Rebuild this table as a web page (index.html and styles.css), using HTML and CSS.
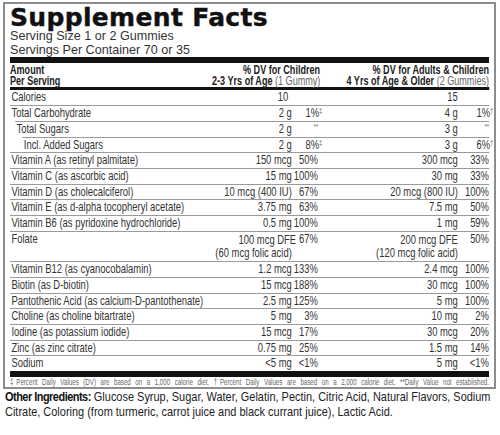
FILE: index.html
```html
<!DOCTYPE html>
<html lang="en">
<head>
    <meta charset="UTF-8">
    <title>Supplement Facts</title>
    <link rel="stylesheet" href="styles.css">
</head>
<body>
    <div class="label">
        <h1 class="title">Supplement Facts</h1>
        <p class="serving">Serving Size 1 or 2 Gummies<br>Servings Per Container 70 or 35</p>
        <div class="bar"></div>

        <!-- narrow type: Arial Narrow is not installed, so the table is squeezed -->
        <div class="cond">
            <div class="head">
                <div class="name">Amount<br>Per Serving</div>
                <div class="dv1">% DV for Children<br>2-3 Yrs of Age <span class="light">(1 Gummy)</span></div>
                <div class="dv2">% DV for Adults &amp; Children<br>4 Yrs of Age &amp; Older <span class="light">(2 Gummies)</span></div>
            </div>

            <div class="row first">
                <div class="name">Calories</div>
                <div class="a1 cal">10</div><div class="p1"></div>
                <div class="a2">15</div><div class="p2"></div>
            </div>
            <div class="row">
                <div class="name">Total Carbohydrate</div>
                <div class="a1">2 g</div><div class="p1">1%<sup>‡</sup></div>
                <div class="a2">4 g</div><div class="p2">1%<sup>†</sup></div>
            </div>
            <div class="row ind1">
                <div class="name">Total Sugars</div>
                <div class="a1">2 g</div><div class="p1"><sup class="na">**</sup></div>
                <div class="a2">3 g</div><div class="p2"><sup class="na">**</sup></div>
            </div>
            <div class="row ind2">
                <div class="name">Incl. Added Sugars</div>
                <div class="a1">2 g</div><div class="p1">8%<sup>‡</sup></div>
                <div class="a2">3 g</div><div class="p2">6%<sup>†</sup></div>
            </div>
            <div class="row">
                <div class="name">Vitamin A (as retinyl palmitate)</div>
                <div class="a1">150 mcg</div><div class="p1">50%</div>
                <div class="a2">300 mcg</div><div class="p2">33%</div>
            </div>
            <div class="row">
                <div class="name">Vitamin C (as ascorbic acid)</div>
                <div class="a1">15 mg</div><div class="p1">100%</div>
                <div class="a2">30 mg</div><div class="p2">33%</div>
            </div>
            <div class="row">
                <div class="name">Vitamin D (as cholecalciferol)</div>
                <div class="a1">10 mcg (400 IU)</div><div class="p1">67%</div>
                <div class="a2">20 mcg (800 IU)</div><div class="p2">100%</div>
            </div>
            <div class="row">
                <div class="name">Vitamin E (as d-alpha tocopheryl acetate)</div>
                <div class="a1">3.75 mg</div><div class="p1">63%</div>
                <div class="a2">7.5 mg</div><div class="p2">50%</div>
            </div>
            <div class="row">
                <div class="name">Vitamin B6 (as pyridoxine hydrochloride)</div>
                <div class="a1">0.5 mg</div><div class="p1">100%</div>
                <div class="a2">1 mg</div><div class="p2">59%</div>
            </div>
            <div class="row two">
                <div class="name">Folate</div>
                <div class="a1"><span class="out">100 mcg DFE</span><br>(60 mcg folic acid)</div><div class="p1">67%</div>
                <div class="a2">200 mcg DFE<br>(120 mcg folic acid)</div><div class="p2">50%</div>
            </div>
            <div class="row">
                <div class="name">Vitamin B12 (as cyanocobalamin)</div>
                <div class="a1">1.2 mcg</div><div class="p1">133%</div>
                <div class="a2">2.4 mcg</div><div class="p2">100%</div>
            </div>
            <div class="row">
                <div class="name">Biotin (as D-biotin)</div>
                <div class="a1">15 mcg</div><div class="p1">188%</div>
                <div class="a2">30 mcg</div><div class="p2">100%</div>
            </div>
            <div class="row">
                <div class="name">Pantothenic Acid (as calcium-D-pantothenate)</div>
                <div class="a1">2.5 mg</div><div class="p1">125%</div>
                <div class="a2">5 mg</div><div class="p2">100%</div>
            </div>
            <div class="row">
                <div class="name">Choline (as choline bitartrate)</div>
                <div class="a1">5 mg</div><div class="p1">3%</div>
                <div class="a2">10 mg</div><div class="p2">2%</div>
            </div>
            <div class="row">
                <div class="name">Iodine (as potassium iodide)</div>
                <div class="a1">15 mcg</div><div class="p1">17%</div>
                <div class="a2">30 mcg</div><div class="p2">20%</div>
            </div>
            <div class="row">
                <div class="name">Zinc (as zinc citrate)</div>
                <div class="a1">0.75 mg</div><div class="p1">25%</div>
                <div class="a2">1.5 mg</div><div class="p2">14%</div>
            </div>
            <div class="row">
                <div class="name">Sodium</div>
                <div class="a1">&lt;5 mg</div><div class="p1">&lt;1%</div>
                <div class="a2">5 mg</div><div class="p2">&lt;1%</div>
            </div>
        </div>

        <div class="bar"></div>
        <div class="cond">
            <p class="foot">‡Percent Daily Values (DV) are based on a 1,000 calorie diet. †Percent Daily Values are based on a 2,000 calorie diet. **Daily Value not established.</p>
        </div>
    </div>

    <div class="ingr-box">
        <p class="ingr"><b>Other Ingredients:</b> Glucose Syrup, Sugar, Water, Gelatin, Pectin, Citric Acid, Natural Flavors, Sodium<br>Citrate, Coloring (from turmeric, carrot juice and black currant juice), Lactic Acid.</p>
    </div>
</body>
</html>
```

FILE: styles.css
```css
body {
    margin: 0;
    background-color: #fff;
    color: #231f20;
    font-family: "Liberation Sans", Arial, sans-serif;
}

.label {
    margin: 2px 4px 0 3px;
    border: 2px solid #8d8d8d;
    padding: 2px 5px 0;
    overflow: hidden;
}

.title {
    margin: 0;
    font-family: "DejaVu Sans", sans-serif;
    font-size: 25px;
    line-height: 24px;
    font-weight: bold;
    letter-spacing: 0.33px;
    color: #111;
    -webkit-text-stroke: 0.4px #111;
}

.serving {
    margin: 0;
    font-size: 12.6px;
    line-height: 13.5px;
    color: #333;
}

.bar {
    height: 6px;
    background-color: #111;
}

/* squeeze to the width of a condensed face */
.cond {
    width: calc(100% / 0.725);
    transform: scaleX(0.725);
    transform-origin: 0 0;
}

/* column header */
.head {
    display: flex;
    padding-top: 2.4px;
    border-bottom: 3px solid #111;
    font-size: 12.5px;
    line-height: 11px;
    font-weight: bold;
    color: #222;
}
.head .name {
    flex: 1;
}
.head .dv1 {
    width: 149px;
    margin-right: -3px;
    text-align: right;
    white-space: nowrap;
}
.head .dv2 {
    width: 236px;
    text-align: right;
    white-space: nowrap;
}
.light {
    font-weight: normal;
    color: #666;
}

/* nutrient rows */
.row {
    display: flex;
    border-top: 1px solid #9a9a9a;
    font-size: 13px;
    line-height: 14.7px;
    color: #333;
}
.row.first {
    border-top: none;
}
.row.ind1 {
    margin-left: 7px;
}
.row.ind2 {
    margin-left: 17px;
}
.row.two {
    height: 29.4px;
}
.row.two .a1,
.row.two .a2 {
    padding-top: 1px;
    line-height: 13px;
}
.row .name {
    flex: 1;
    padding-left: 2px;
    white-space: nowrap;
}
.a1 {
    width: 110px;
    text-align: right;
    white-space: nowrap;
}
.a1.cal {
    box-sizing: border-box;
    padding-right: 5px;
}
.a1 .out {
    margin-right: -6px;
}
.p1 {
    width: 36px;
    text-align: right;
}
.a2 {
    width: 193px;
    text-align: right;
    white-space: nowrap;
}
.p2 {
    width: 43px;
    text-align: right;
}
.row sup {
    font-size: 8px;
    line-height: 0;
    vertical-align: 4px;
    margin-right: -6px;
    color: #666;
}
.row sup.na {
    margin-right: 0;
}

.foot {
    margin: 0;
    padding-top: 1px;
    font-size: 8.5px;
    line-height: 9px;
    color: #666;
    text-align: justify;
    text-align-last: justify;
}

.ingr-box {
    padding-left: 5px;
    overflow: hidden;
}
.ingr {
    width: calc((100% - 6px) / 0.85);
    margin: 0;
    transform: scaleX(0.85);
    transform-origin: 0 0;
    font-size: 12.9px;
    line-height: 15px;
    color: #222;
}
.ingr b {
    letter-spacing: -0.6px;
    color: #111;
}
```
